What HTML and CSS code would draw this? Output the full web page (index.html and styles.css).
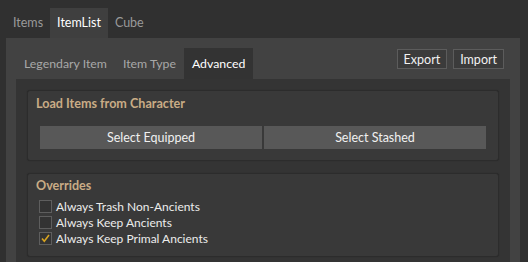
FILE: index.html
```html
<!DOCTYPE html>
<html lang="en">
<head>
  <meta charset="UTF-8" />
  <title>ItemList - Advanced</title>
  <link rel="stylesheet" href="styles.css">
</head>
<body>
  <div class="tabs">
    <div class="tab">Items</div>
    <div class="tab active">ItemList</div>
    <div class="tab">Cube</div>
  </div>

  <div class="panel">
    <div class="subbar">
      <div class="subtab">Legendary Item</div>
      <div class="subtab">Item Type</div>
      <div class="subtab active">Advanced</div>
      <div class="tools">
        <button class="tool-btn">Export</button>
        <button class="tool-btn">Import</button>
      </div>
    </div>

    <div class="content">
      <div class="group">
        <div class="group-title">Load Items from Character</div>
        <div class="btn-row">
          <button class="wide-btn">Select Equipped</button>
          <button class="wide-btn">Select Stashed</button>
        </div>
      </div>

      <div class="group overrides">
        <div class="group-title">Overrides</div>
        <label class="check"><span class="box"></span>Always Trash Non-Ancients</label>
        <label class="check"><span class="box"></span>Always Keep Ancients</label>
        <label class="check"><span class="box"><svg width="11" height="11" viewBox="0 0 11 11"><path d="M2 5.5 L4.3 8.2 L9 2" fill="none" stroke="#d9a520" stroke-width="1.6"/></svg></span>Always Keep Primal Ancients</label>
      </div>
    </div>
  </div>
</body>
</html>
```

FILE: styles.css
```css
body {
  margin: 0;
  background: #303030;
  font-family: Lato, "Open Sans", sans-serif;
  font-size: 12px;
  color: #e8e8e8;
  overflow: hidden;
}
.tabs {
  display: flex;
  padding: 8px 0 0 6px;
  height: 30px;
}
.tab {
  padding: 0 7px;
  line-height: 30px;
  color: #9a9a9a;
  font-size: 12.5px;
}
.tab.active {
  background: #3f3f3f;
  color: #fff;
}
.panel {
  margin: 0 8px 0 6px;
  background: #424242;
  padding: 10px 10px 0 10px;
}
.subbar {
  display: flex;
  height: 31px;
}
.subtab {
  padding: 0 8px;
  line-height: 31px;
  color: #a8a8a8;
  font-size: 12.3px;
}
.subtab.active {
  background: #333;
  color: #fff;
}
.tools {
  margin-left: auto;
  margin-right: 6px;
  display: flex;
  gap: 6px;
  align-items: flex-start;
  padding-top: 1px;
}
.tool-btn {
  font-family: inherit;
  font-size: 12.5px;
  color: #f2f2f2;
  background: #3b3b3b;
  border: 1px solid #5c5c5c;
  height: 20px;
  padding: 0 6px;
  line-height: 17px;
}
.content {
  background: #343434;
  padding: 11px;
  height: 183px;
  box-sizing: border-box;
}
.group {
  background: #393939;
  border: 1px solid #2c2c2c;
  border-radius: 3px;
  padding: 5px 12px 11px 12px;
  box-shadow: 0 0 1px rgba(0,0,0,0.3);
}
.group-title {
  font-weight: bold;
  font-size: 12.6px;
  color: #c9ac86;
  line-height: 16px;
  margin-left: -4px;
}
.btn-row {
  display: flex;
  gap: 2px;
  margin-top: 14px;
}
.wide-btn {
  flex: 1;
  height: 23px;
  background: #585858;
  border: none;
  color: #f0f0f0;
  font-family: inherit;
  font-size: 12.5px;
  padding: 0;
}
.overrides {
  margin-top: 12px;
  padding: 4px 12px 10px 11px;
}
.overrides .group-title {
  margin-left: -3px;
  margin-bottom: 4px;
}
.check {
  display: flex;
  align-items: center;
  height: 16px;
  color: #ececec;
}
.box {
  width: 11px;
  height: 11px;
  border: 1px solid #5e5e5e;
  background: #333;
  margin-right: 4px;
  display: flex;
  align-items: center;
  justify-content: center;
}
```
